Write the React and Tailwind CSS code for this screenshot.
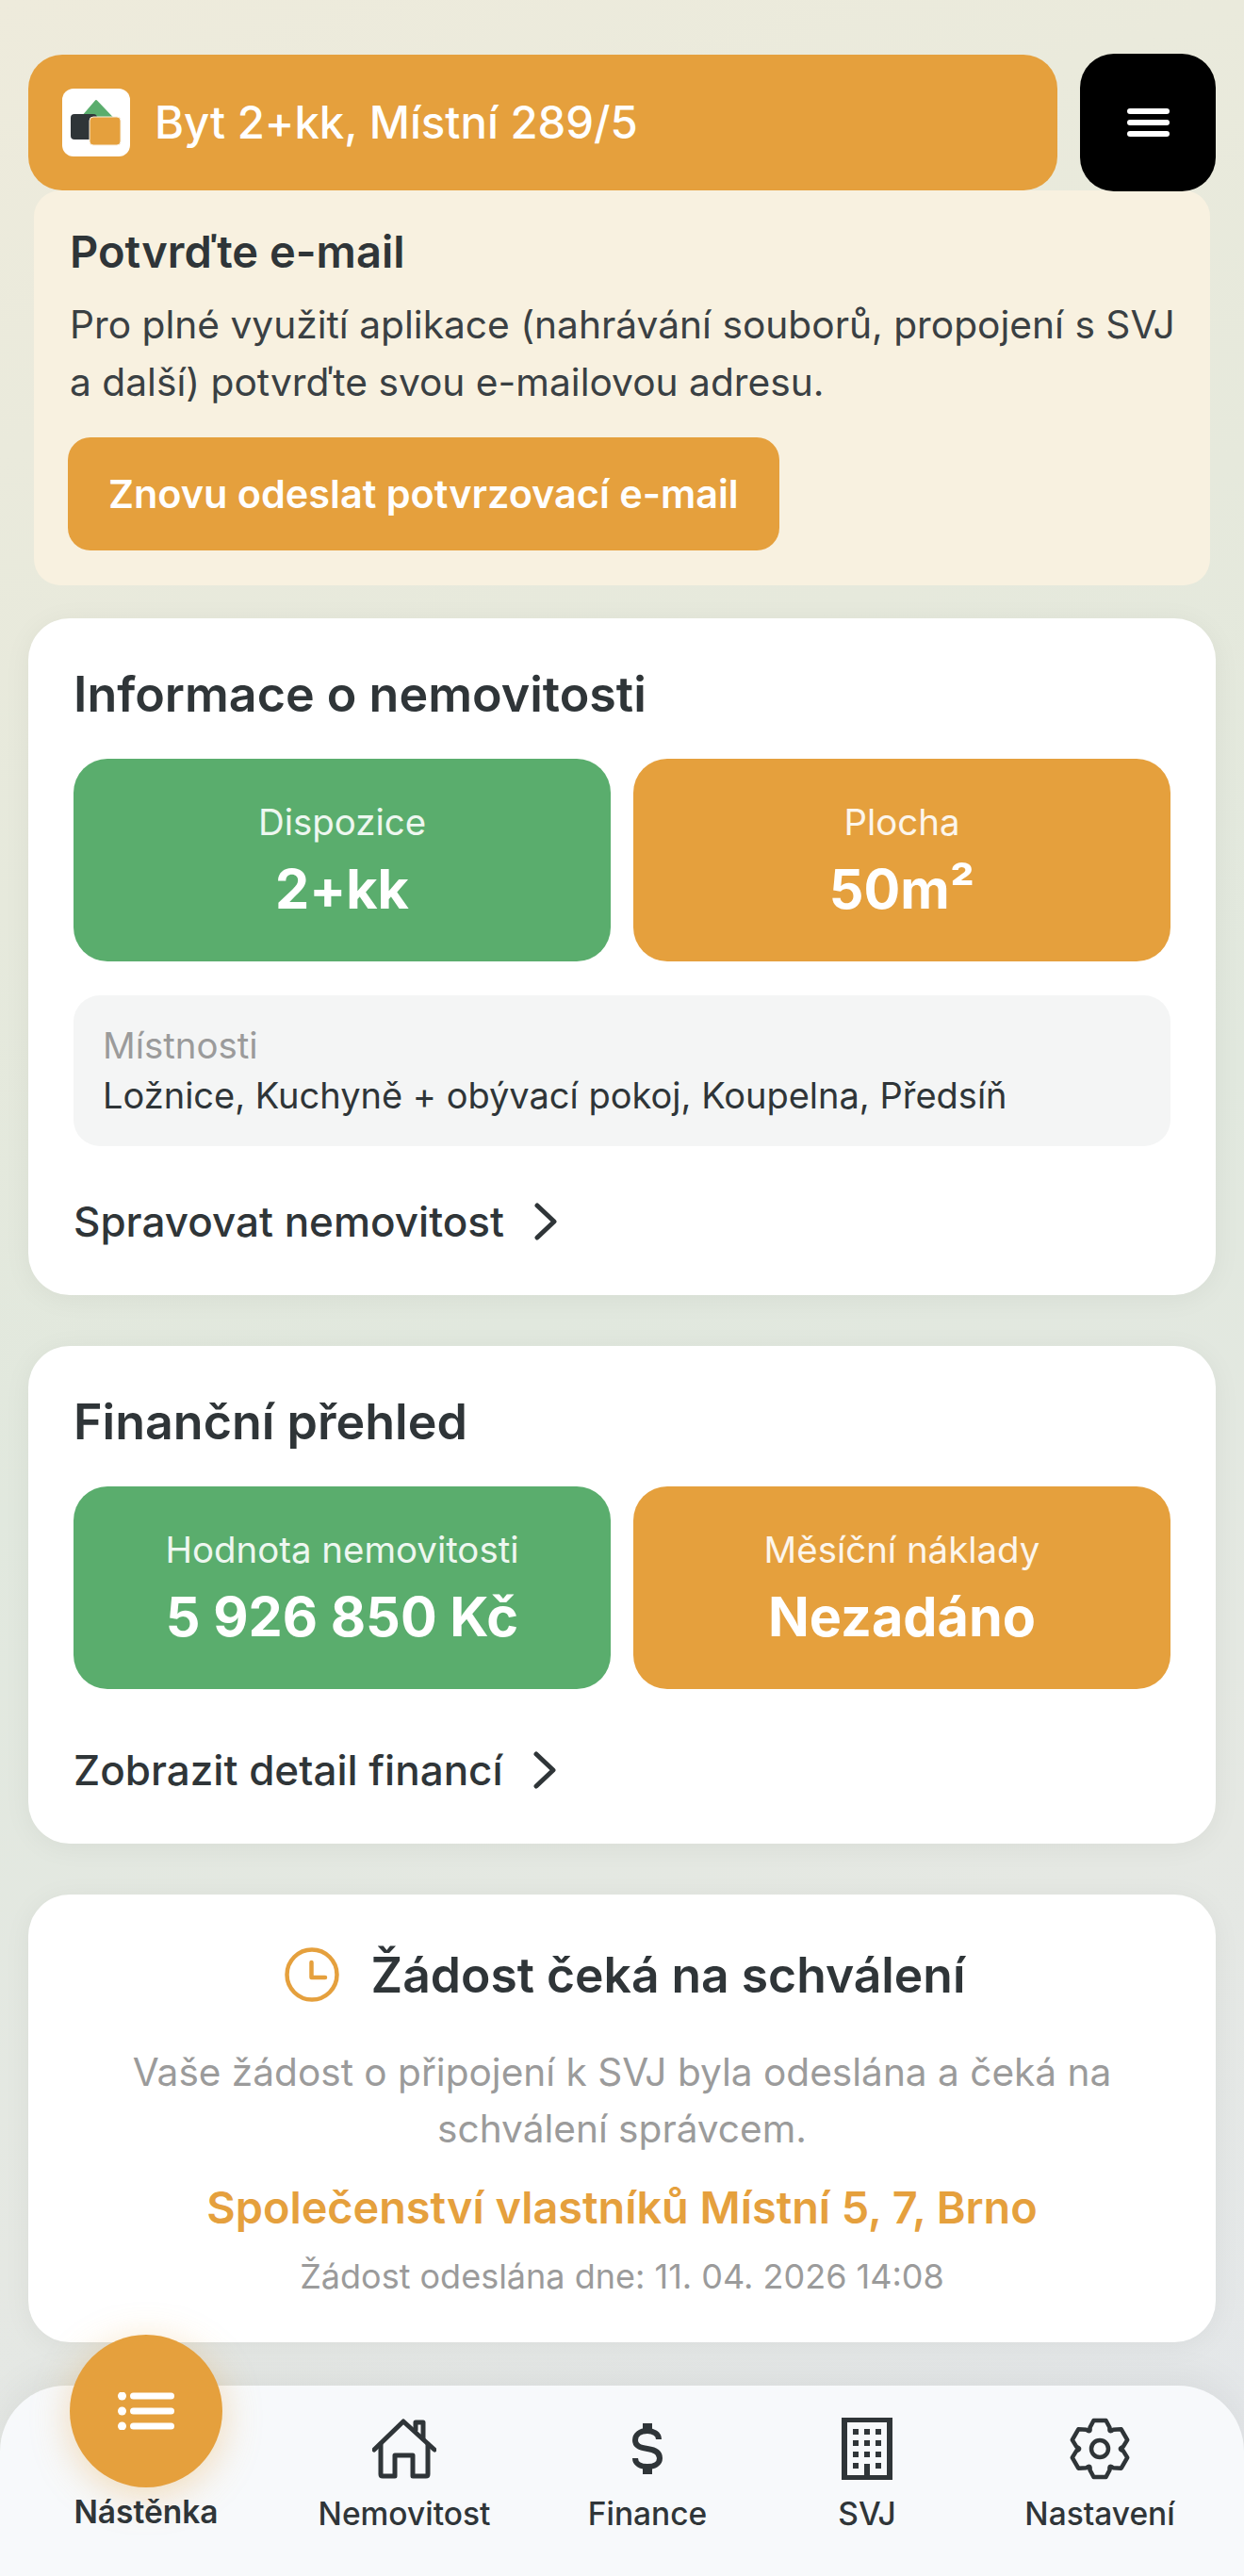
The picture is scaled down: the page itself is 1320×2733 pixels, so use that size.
import React from 'react';

function Tile({ color, label, value }) {
  return (
    <div className={`${color} h-[215px] rounded-[36px] flex flex-col items-center justify-center gap-[13px] text-white`}>
      <div className="text-[38.4px] leading-[48px] text-white/90">{label}</div>
      <div className="text-[57.5px] leading-[68px] font-bold">{value}</div>
    </div>
  );
}

function Chevron() {
  return (
    <svg width="24" height="40" viewBox="0 0 24 40" fill="none" stroke="#2f3538" strokeWidth="5" strokeLinecap="round" strokeLinejoin="round">
      <path d="M3 3 L21 20 L3 37" />
    </svg>
  );
}

function CardLink({ children, className }) {
  return (
    <div className={`flex items-center gap-[32px] h-[56px] text-[44px] font-medium text-[#2f3538] ${className}`}>
      <span>{children}</span>
      <Chevron />
    </div>
  );
}

function Logo() {
  return (
    <div className="w-[72px] h-[72px] rounded-[12px] bg-white shrink-0">
      <svg width="72" height="72" viewBox="0 0 72 72">
        <path d="M36 13 L56 34 H18 Z" fill="#5aad6d" stroke="#5aad6d" strokeWidth="2" strokeLinejoin="round" />
        <rect x="9" y="27" width="28" height="27" rx="4" fill="#2f3538" />
        <rect x="29" y="30" width="33" height="30" rx="4" fill="#e5a03d" stroke="#f8efe0" strokeWidth="1" />
      </svg>
    </div>
  );
}

function NavItem({ icon, label }) {
  return (
    <div className="pt-[27px] flex flex-col items-center">
      <div className="h-[80px] flex items-center justify-center">{icon}</div>
      <div className="mt-[9px] text-[33.5px] leading-[40px] font-medium whitespace-nowrap text-[#2f3538]">{label}</div>
    </div>
  );
}

const HouseIcon = (
  <svg width="68" height="64" viewBox="0 0 68 64" fill="none" stroke="#2f3538" strokeWidth="5" strokeLinecap="round" strokeLinejoin="round">
    <path d="M2 33 L33 3 L66 33" />
    <path d="M9 27 V59 Q9 61 11 61 H24 V39 H43 V61 H57 Q59 61 59 59 V27" />
    <path d="M46 12 V4 H54 V21" />
  </svg>
);

const DollarIcon = (
  <svg width="32" height="54" viewBox="0 0 32 54" fill="none" stroke="#2f3538" strokeWidth="6">
    <path d="M28 17 C28 11 22 8 16 8 C8 8 3 12 3 18 C3 24 8 26 16 27 C24 28 29 31 29 37 C29 43 23 46 16 46 C9 46 3 43 3 37" />
    <path d="M16 0 V9 M16 45 V54" strokeWidth="10" />
  </svg>
);

const BuildingIcon = (
  <svg width="54" height="66" viewBox="0 0 54 66" fill="#2f3538">
    <path fillRule="evenodd" d="M0 0 H54 V66 H0 Z M6 5 V61 H24 V49 H30 V61 H48 V5 Z" />
    <rect x="12" y="12" width="6" height="6" />
    <rect x="24" y="12" width="6" height="6" />
    <rect x="36" y="12" width="6" height="6" />
    <rect x="12" y="24" width="6" height="6" />
    <rect x="24" y="24" width="6" height="6" />
    <rect x="36" y="24" width="6" height="6" />
    <rect x="12" y="36" width="6" height="6" />
    <rect x="24" y="36" width="6" height="6" />
    <rect x="36" y="36" width="6" height="6" />
    <rect x="12" y="48" width="6" height="6" />
    <rect x="36" y="48" width="6" height="6" />
  </svg>
);

// six teeth, valleys are pulled in with a quadratic curve
function gearPath() {
  const cx = 32;
  const cy = 33;
  const pt = (deg, u, v) => {
    const a = (deg * Math.PI) / 180;
    const x = cx + u * Math.cos(a) - v * Math.sin(a);
    const y = cy + u * Math.sin(a) + v * Math.cos(a);
    return `${x.toFixed(2)} ${y.toFixed(2)}`;
  };
  let d = '';
  for (let k = 0; k < 6; k++) {
    const deg = -90 + 60 * k;
    d += `${k === 0 ? 'M' : 'L'}${pt(deg, 22.5, -10.5)} L${pt(deg, 30, -6.5)} L${pt(deg, 30, 6.5)} L${pt(deg, 22.5, 10.5)} `;
    d += `Q${pt(deg + 30, 19, 0)} ${pt(deg + 60, 22.5, -10.5)} `;
  }
  return d + 'Z';
}

const GearIcon = (
  <svg width="64" height="66" viewBox="0 0 64 66" fill="none" stroke="#2f3538" strokeWidth="4.5" strokeLinejoin="round">
    <path d={gearPath()} />
    <circle cx="32" cy="33" r="9" />
  </svg>
);

export default function App() {
  return (
    <div className="w-[1320px] h-[2733px] overflow-hidden bg-[linear-gradient(160deg,#eeebdc_0%,#e6e9dc_30%,#e1e8de_50%,#e5e8e3_75%,#e4e7eb_100%)] font-['Inter','Noto_Sans',sans-serif] text-[#2f3538]">
      <div className="pt-[57px] px-[30px]">
        <div className="flex gap-[24px] items-center">
          <div className="flex-1 h-[144px] bg-[#e5a03d] rounded-[36px] flex items-center gap-[26px] pl-[36px]">
            <Logo />
            <span className="text-[47.3px] font-medium text-white">Byt 2+kk, Místní 289/5</span>
          </div>
          <div className="w-[144px] h-[146px] bg-black rounded-[36px] flex flex-col items-center justify-center gap-[6px]">
            <div className="w-[45px] h-[6px] rounded-full bg-white" />
            <div className="w-[45px] h-[6px] rounded-full bg-white" />
            <div className="w-[45px] h-[6px] rounded-full bg-white" />
          </div>
        </div>

        <div className="-mt-px mx-[6px] bg-[#f8f1e0] rounded-[28px] pt-[37px] pb-[37px] pl-[38px] pr-[20px]">
          <h2 className="text-[47px] leading-[56px] font-semibold">Potvrďte e-mail</h2>
          <p className="mt-[19px] text-[40.7px] leading-[61px] text-[#3a4043]">
            Pro plné využití aplikace (nahrávání souborů, propojení s SVJ a další) potvrďte svou e-mailovou adresu.
          </p>
          <div className="mt-[28px] -ml-[2px] inline-flex items-center h-[120px] px-[43px] rounded-[24px] bg-[#e5a03d] text-white text-[41.4px] font-semibold">
            Znovu odeslat potvrzovací e-mail
          </div>
        </div>

        <div className="mt-[35px] bg-white rounded-[44px] shadow-[0_4px_30px_rgba(0,0,0,0.05)] pt-[49px] pb-[50px] px-[48px]">
          <h2 className="text-[52px] leading-[64px] font-semibold">Informace o nemovitosti</h2>
          <div className="mt-[36px] grid grid-cols-2 gap-[24px]">
            <Tile color="bg-[#5aad6d]" label="Dispozice" value="2+kk" />
            <Tile color="bg-[#e5a03d]" label="Plocha" value="50m²" />
          </div>
          <div className="mt-[36px] h-[160px] rounded-[28px] bg-[#f4f5f5] px-[31px] flex flex-col justify-center gap-[3px]">
            <div className="text-[38.4px] leading-[48px] text-[#9b9b9b]">Místnosti</div>
            <div className="text-[38px] leading-[52px] text-[#2f3538]">Ložnice, Kuchyně + obývací pokoj, Koupelna, Předsíň</div>
          </div>
          <CardLink className="mt-[52px]">Spravovat nemovitost</CardLink>
        </div>

        <div className="mt-[54px] bg-white rounded-[44px] shadow-[0_4px_30px_rgba(0,0,0,0.05)] pt-[49px] pb-[50px] px-[48px]">
          <h2 className="text-[52px] leading-[64px] font-semibold">Finanční přehled</h2>
          <div className="mt-[36px] grid grid-cols-2 gap-[24px]">
            <Tile color="bg-[#5aad6d]" label="Hodnota nemovitosti" value="5 926 850 Kč" />
            <Tile color="bg-[#e5a03d]" label="Měsíční náklady" value="Nezadáno" />
          </div>
          <CardLink className="mt-[58px]">Zobrazit detail financí</CardLink>
        </div>

        <div className="mt-[54px] bg-white rounded-[44px] shadow-[0_4px_30px_rgba(0,0,0,0.05)] pt-[53px] pb-[46px] px-[48px] text-center">
          <div className="flex items-center justify-center gap-[34px] h-[64px] pl-[6px]">
            <svg width="58" height="58" viewBox="0 0 58 58" fill="none" stroke="#e5a03d" strokeWidth="4.5" strokeLinecap="round" strokeLinejoin="round">
              <circle cx="29" cy="29" r="26.5" />
              <path d="M28.5 16 V32 H43" />
            </svg>
            <h2 className="text-[51.6px] leading-[64px] font-semibold">Žádost čeká na schválení</h2>
          </div>
          <p className="mt-[42px] text-[40.6px] leading-[60px] text-[#9b9b9b]">
            Vaše žádost o připojení k SVJ byla odeslána a čeká na<br />schválení správcem.
          </p>
          <div className="mt-[23px] text-[46.8px] leading-[60px] font-semibold text-[#e5a03d]">Společenství vlastníků Místní 5, 7, Brno</div>
          <div className="mt-[19px] text-[36px] leading-[48px] text-[#9b9b9b]">Žádost odeslána dne: 11. 04. 2026 14:08</div>
        </div>
      </div>

      <div className="mt-[46px] h-[202px] rounded-t-[70px] bg-[#f7f9fb] shadow-[0_-10px_40px_rgba(0,0,0,0.05)] pl-[74px] grid grid-cols-[162px_386px_130px_336px_158px] justify-items-center">
        <div className="-mt-[54px] flex flex-col items-center">
          <div className="w-[162px] h-[162px] rounded-full bg-[#e5a03d] shadow-[0_8px_40px_rgba(229,160,61,0.35)] flex items-center justify-center">
            <svg width="60" height="40" viewBox="0 0 60 40" fill="#fff">
              <circle cx="4.5" cy="4" r="4.5" />
              <circle cx="4.5" cy="20" r="4.5" />
              <circle cx="4.5" cy="36" r="4.5" />
              <rect x="13" y="0.5" width="47" height="7" rx="3.5" />
              <rect x="13" y="16.5" width="47" height="7" rx="3.5" />
              <rect x="13" y="32.5" width="47" height="7" rx="3.5" />
            </svg>
          </div>
          <div className="mt-[6px] text-[33.5px] leading-[40px] font-semibold whitespace-nowrap">Nástěnka</div>
        </div>
        <NavItem icon={HouseIcon} label="Nemovitost" />
        <NavItem icon={DollarIcon} label="Finance" />
        <NavItem icon={BuildingIcon} label="SVJ" />
        <NavItem icon={GearIcon} label="Nastavení" />
      </div>
    </div>
  );
}
